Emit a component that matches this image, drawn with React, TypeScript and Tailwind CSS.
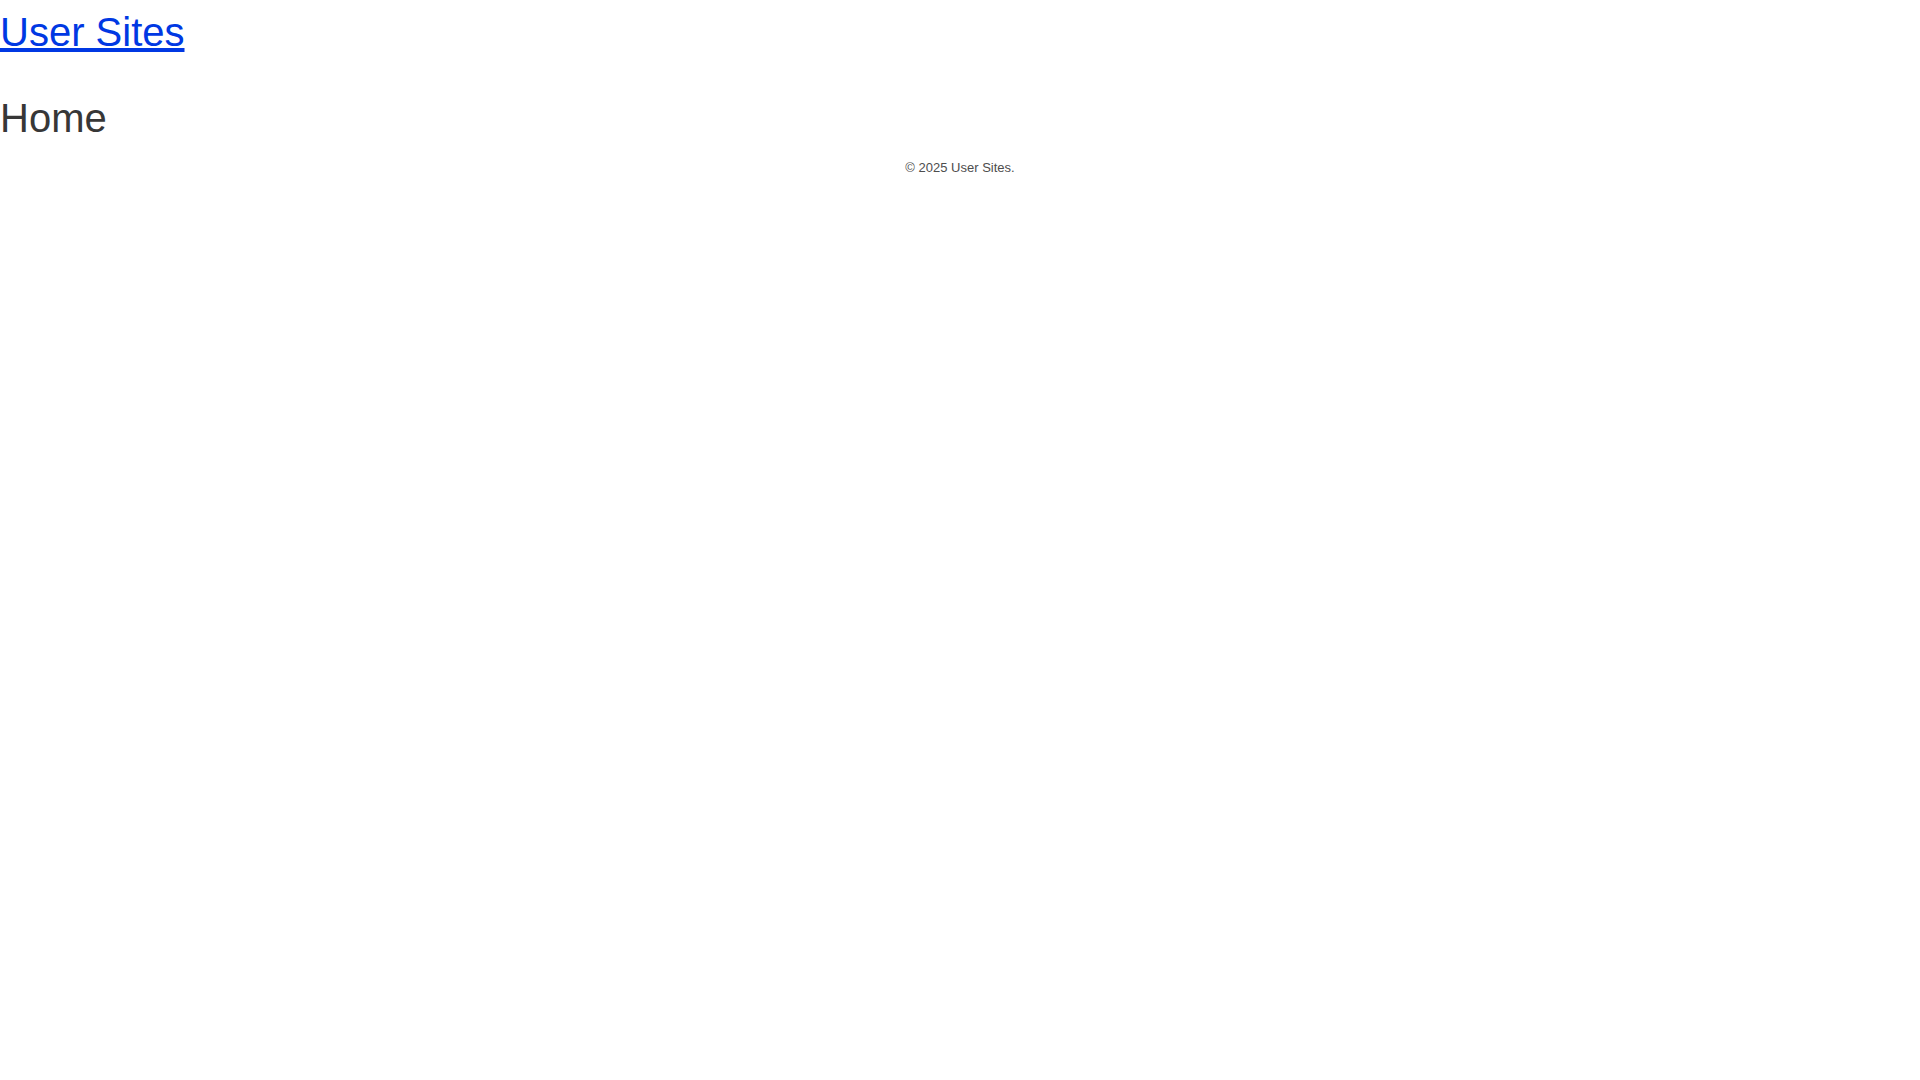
export default function App() {
  return (
    <div className="bg-white font-['Liberation_Sans',Arial,sans-serif] text-[#373737]">
      <header className="mt-3 mb-9">
        <h1 className="text-[40px] leading-[40px] font-normal">
          <a href="#" className="text-[#0038e3] underline">
            User Sites
          </a>
        </h1>
      </header>

      <main>
        <h2 className="text-[40px] leading-[60px] font-normal">Home</h2>
      </main>

      <footer className="mt-2 text-center text-[13px] leading-[24px] text-[#4d4d4d]">
        <p>© 2025 User Sites.</p>
      </footer>
    </div>
  );
}
